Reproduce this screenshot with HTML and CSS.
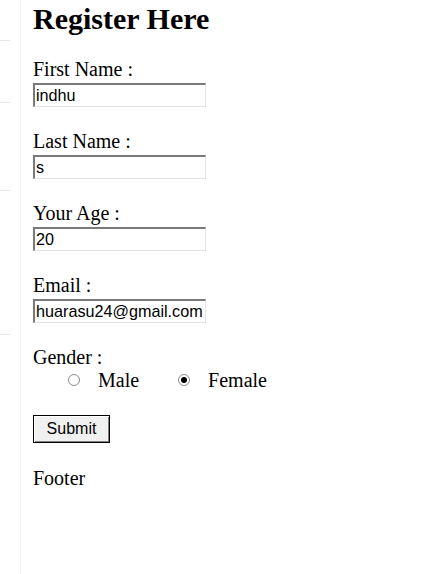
FILE: index.html
```html
<!DOCTYPE html>
<html>
<head>
<meta charset="utf-8">
<link rel="stylesheet" href="styles.css">
</head>
<body>
<div class="page">
  <aside class="sidebar">
    <div class="nav-item h1"></div>
    <div class="nav-item h2"></div>
    <div class="nav-item h3"></div>
    <div class="nav-item h4"></div>
  </aside>
  <main class="main">
    <h2 class="title">Register Here</h2>
    <form class="form">
      <div class="field">
        <label class="label">First Name :</label>
        <input class="input" type="text" value="indhu">
      </div>
      <div class="field">
        <label class="label">Last Name :</label>
        <input class="input" type="text" value="s">
      </div>
      <div class="field">
        <label class="label">Your Age :</label>
        <input class="input" type="text" value="20">
      </div>
      <div class="field">
        <label class="label">Email :</label>
        <input class="input" type="text" value="huarasu24@gmail.com">
      </div>
      <div class="gender">
        <div class="label">Gender :</div>
        <div class="radios">
          <input class="radio" type="radio" name="g" id="m">
          <label class="radio-label" for="m">Male</label>
          <input class="radio radio-second" type="radio" name="g" id="f" checked>
          <label class="radio-label" for="f">Female</label>
        </div>
      </div>
      <button class="submit" type="button">Submit</button>
    </form>
    <footer class="footer">Footer</footer>
  </main>
</div>
</body>
</html>
```

FILE: styles.css
```css
html, body {
  margin: 0;
  padding: 0;
  background: #fff;
}
body {
  font-family: "Liberation Serif", "Times New Roman", serif;
  font-size: 20px;
  color: #000;
}
.page {
  display: flex;
  min-height: 574px;
}
.sidebar {
  width: 20px;
  border-right: 1px solid #efefef;
  display: flex;
  flex-direction: column;
  flex-shrink: 0;
}
.nav-item {
  width: 10px;
  border-bottom: 1px solid #e6e6e6;
}
.nav-item.h1 { height: 40px; }
.nav-item.h2 { height: 61px; }
.nav-item.h3 { height: 87px; }
.nav-item.h4 { height: 143px; }
.main {
  padding-left: 12px;
  flex: 1;
}
.title {
  font-size: 30px;
  font-weight: bold;
  margin: 2px 0 24px;
  line-height: 33px;
}
.form {
  display: flex;
  flex-direction: column;
  align-items: flex-start;
}
.field {
  display: flex;
  flex-direction: column;
  align-items: flex-start;
  margin-bottom: 24px;
}
.label {
  display: block;
  line-height: 21px;
  margin-bottom: 3px;
}
.input {
  box-sizing: border-box;
  width: 173px;
  height: 24px;
  margin: 0;
  padding: 0 1px;
  font-family: "Liberation Sans", Arial, sans-serif;
  font-size: 16.2px;
  color: #000;
  border-width: 2px 1px 1px 2px;
  border-style: solid;
  border-color: #7a7a7a #e3e3e3 #e3e3e3 #7a7a7a;
  outline: none;
}
.gender .label {
  margin-bottom: 0;
}
.radios {
  display: flex;
  align-items: center;
  height: 24px;
  padding-left: 35px;
}
.radio {
  appearance: none;
  -webkit-appearance: none;
  box-sizing: border-box;
  width: 12px;
  height: 12px;
  margin: 0 18px 0 0;
  border: 1px solid #8a8a8a;
  border-radius: 50%;
  background: #fff;
  position: relative;
}
.radio:checked::after {
  content: "";
  position: absolute;
  left: 2px;
  top: 2px;
  width: 6px;
  height: 6px;
  border-radius: 50%;
  background: #000;
}
.radio-second {
  margin-left: 39px;
}
.radio-label {
  line-height: 24px;
}
.submit {
  margin-top: 23px;
  box-sizing: border-box;
  width: 77px;
  height: 28px;
  padding: 0;
  font-family: "Liberation Sans", Arial, sans-serif;
  font-size: 16px;
  color: #000;
  background: #f0f0f0;
  border: 1px solid #000;
  box-shadow: inset 1px 1px #fff, inset -1px -1px #808080;
}
.footer {
  margin-top: 24px;
  line-height: 22px;
}
```
